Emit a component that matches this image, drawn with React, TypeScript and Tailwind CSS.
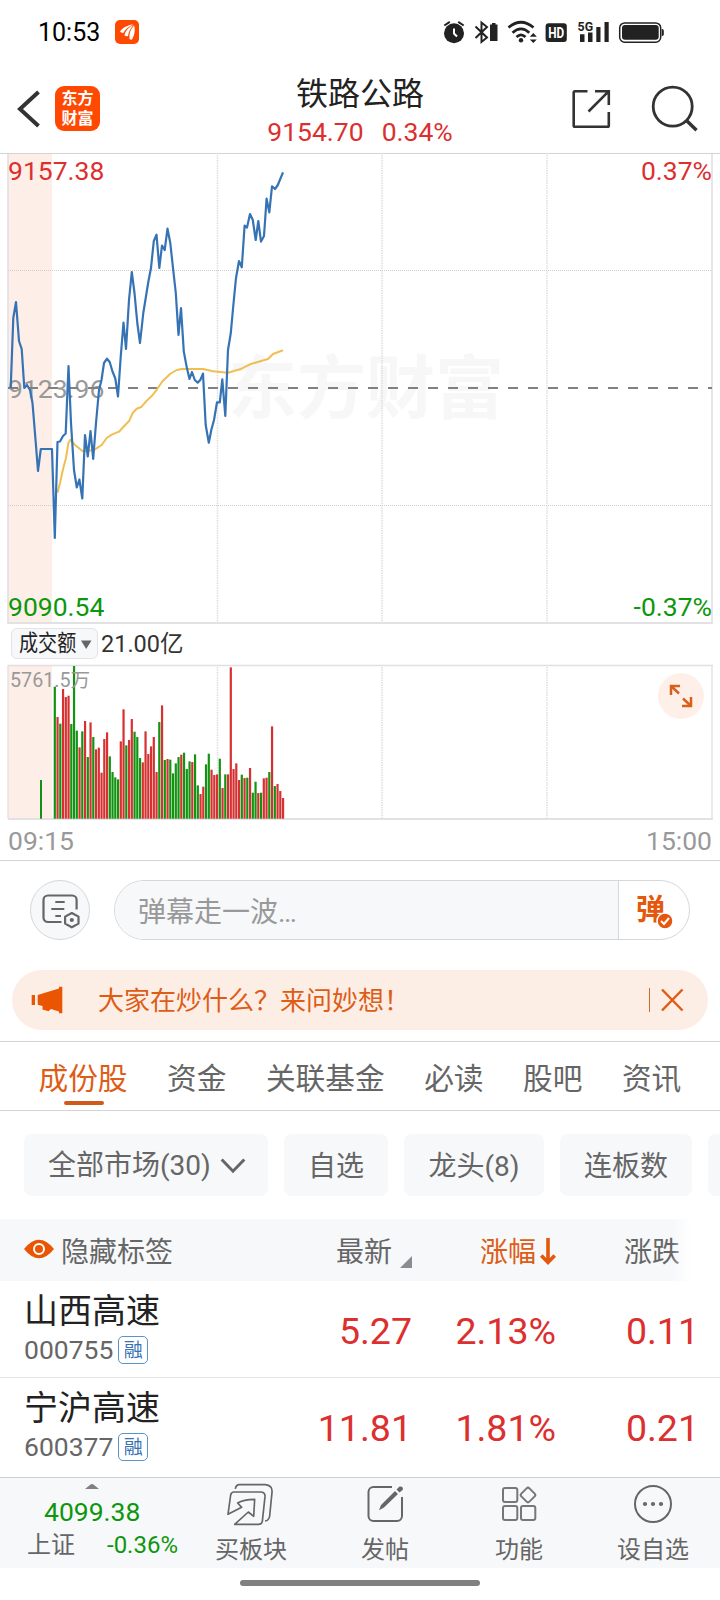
import React from 'react';

const PRICE_LINE =
  '10.7,388 13.3,318 16,302 19,341 21.7,349 24.3,388 27,385 30,390 32.5,403 35.7,442 38,471 40.8,449 52,449 54.8,538 57.5,442 60,441.5 63,436 65.7,433.5 68.5,366 71,423 74,470 76.8,487.5 79.4,479.5 82.3,498.5 85,435 87.8,456.5 90.5,431 93.2,459 96,423 99,390 101.5,380 104,363 107,358.7 109.7,362 112.5,371.5 115.3,378.5 118,396.5 120.7,357 123.5,322.5 126,349 129,300 131.8,272 134.5,293 137.3,323 140,343 143.3,313 148.3,282 151,268 153.8,241 156.5,234.7 159.3,268 162,245.6 164.7,250 167.5,228.7 170.3,243 173,268 175.8,293 178.5,335 181,308 183.8,351.6 186.7,367 189.5,379 192,372 194.8,380 197.7,382.6 200.3,380 203,373.6 205.7,425 208.8,442.7 211.3,430 214,420 217,402.3 219.8,402.3 222.3,379.3 225.3,416 228,350 230.8,333 233.5,303.5 236,278 239,261 241.8,267.3 244.6,225.6 247,227.6 250,214 252.8,220 255.7,240 258.3,221 261,241.6 264,236 266.6,198.6 269.3,212.3 272,186.3 275,189 277.8,185 283,172.3';

const AVG_LINE =
  '56,490 57.8,491.7 60,483 63.3,468 66,458 68.3,443.3 70.3,439.7 75,445 80,449 82.7,451.3 88.5,451 95,449.3 101.7,445 106.7,438 111.7,434.7 119,431.7 123.3,427 129.3,420.7 132.7,413 136.7,408.7 141.7,406.7 146.7,400.7 152.7,395 157,389.3 162.3,381.5 170,374 176.7,370 181.7,369 203,369 213,371.3 228,372.7 240,369.3 250,364.3 268,359 273,354 283,350.3';

// g = down minute, r = up minute, number = bar height
const VOLUME =
  'g396 r305 g285 r389 r365 r369 g284 g458 g264 r214 g262 r293 g185 r289 g245 r208 r213 r138 r239 r259 g187 g140 g124 g118 r232 r328 g220 r236 r299 g261 g245 g182 r169 r262 r194 r217 r245 r140 g290 r340 g176 r179 g177 g136 g166 g185 r192 g198 g149 g172 r170 g193 g100 r74 r96 g163 g195 r147 r131 r133 g180 r92 g133 r133 r454 r149 r166 r116 g132 r122 g123 r152 g78 g111 r77 g78 r121 r123 g140 r277 g98 r104 r83 r62'
    .split(' ')
    .map((v) => ({ up: v[0] === 'r', h: Number(v.slice(1)) / 3 }));

const GRID_X = [217.5, 382, 547];

const TABS = ['成份股', '资金', '关联基金', '必读', '股吧', '资讯'];

const STOCKS = [
  { name: '山西高速', code: '000755', price: '5.27', pct: '2.13%', diff: '0.11' },
  { name: '宁沪高速', code: '600377', price: '11.81', pct: '1.81%', diff: '0.21' },
];

interface IconProps {
  x: number;
  y: number;
  w: number;
  h: number;
  className?: string;
  children: React.ReactNode;
}

const Icon: React.FC<IconProps> = ({ x, y, w, h, className = '', children }) => (
  <svg width={w} height={h} viewBox={`${x} ${y} ${w} ${h}`} fill="none" className={`shrink-0 ${className}`}>
    {children}
  </svg>
);

const StatusBar = () => (
  <div className="flex h-16 items-center pl-[38px] text-black">
    <span className="pt-0.5 text-[25px] leading-8">10:53</span>
    <Icon x={115} y={20} w={24} h={24} className="ml-auto">
      <rect x="115" y="20" width="24" height="24" rx="5" fill="#ff4800" />
      <path d="M120 31.5c2.500-3.500 6.500-6 13-7.200-5 3-8 5.500-9.600 8.600-1.200.3-2.600-.3-3.400-1.400Z" fill="#fff" />
      <path d="M124.400 35.200c1-4.200 4.200-8 9.200-10.400-3.200 3.600-5 7.400-5.600 11.200-1.300.4-2.800.1-3.600-.8Z" fill="#fff" />
      <path d="M129.500 38.800c-.6-5 .8-9.600 4.600-13.400 1.200 3.800.8 9.200-2.200 14.200-.9.200-1.800-.1-2.400-.8Z" fill="#fff" />
    </Icon>
    <div className="w-[304px]" />
    <Icon x={443} y={16} w={277} h={32}>
      {/* alarm */}
      <circle cx="454" cy="33.300" r="10" fill="#222" />
      <path d="M444.300 25.500 449.800 21.800M463.700 25.500 458.200 21.800" stroke="#222" strokeWidth="2" />
      <path d="M454 28.500V33.500L457 36.500" stroke="#fff" strokeWidth="2" />
      {/* bluetooth + device battery */}
      <path d="M475.500 26.500 487 37.500 481.500 42V22.500L487 27 475.500 38" stroke="#222" strokeWidth="2" />
      <path d="M492 24.500V23h3.500v1.500h2V41H490V24.500Z" fill="#222" />
      {/* wifi */}
      <path d="M508.500 27.500Q521 17 533.500 27.500M512.500 32.800Q521 25 529.300 32.800M516.500 37Q521 32.800 525.500 37" stroke="#222" strokeWidth="2.700" />
      <circle cx="521" cy="40.200" r="2.200" fill="#222" />
      <path d="M529.800 36.800h7L533.300 33ZM529.800 39.500h7L533.300 43Z" fill="#222" />
      {/* HD */}
      <rect x="545.600" y="23.300" width="21.200" height="18.700" rx="3" fill="#222" />
      <text x="556.200" y="38" textAnchor="middle" textLength="16" lengthAdjust="spacingAndGlyphs" fontSize="14.500" fontWeight="700" fill="#fff">HD</text>
      {/* signal */}
      <text x="577.600" y="31" textLength="15.500" lengthAdjust="spacingAndGlyphs" fontSize="13.500" fontWeight="700" fill="#222">5G</text>
      <path d="M580 34.300h4.500V42H580ZM588 32.500h4.500V42H588ZM596.300 27h4.200v15h-4.200ZM604.500 22h4.200v20h-4.200Z" fill="#222" />
      {/* battery */}
      <rect x="619.700" y="22.900" width="41" height="19.300" rx="5" stroke="#222" strokeWidth="1.500" />
      <rect x="622" y="25" width="36.700" height="14.800" rx="3" fill="#222" />
      <path d="M661.800 28.700q2 .3 2 2v3.600q0 1.700-2 2Z" fill="#222" />
    </Icon>
  </div>
);

const Header = () => (
  <div className="relative flex h-[90px] items-center justify-between border-b border-[#d4d4d6] pl-4">
    <div className="flex items-center gap-[14px]">
      <Icon x={16} y={88} w={25} h={42}>
        <path d="M38.500 92 20 109 38.500 126" stroke="#333" strokeWidth="4" />
      </Icon>
      <div className="h-[45px] w-[45px] rounded-[9px] bg-[#ff4800] pt-[3px] text-center text-[16px] font-bold leading-[19.500px] text-white">
        东方
        <br />
        财富
      </div>
    </div>
    <div className="absolute inset-x-0 top-[10px] flex flex-col items-center">
      <div className="text-[32px] leading-[40px] text-[#222]">铁路公路</div>
      <div className="flex gap-[18px] pt-px text-[26.500px] leading-[34px] text-[#dc2f2f]">
        <span>9154.70</span>
        <span>0.34%</span>
      </div>
    </div>
    <Icon x={570} y={84} w={150} h={50}>
      <path d="M587.500 91.200H575q-1.300 0-1.300 1.300V125.500q0 1.300 1.300 1.300H607.500q1.300 0 1.300-1.300V112M595 91.200H608.800V105M588.500 111.500 608.800 91.200" stroke="#333" strokeWidth="2.600" />
      <circle cx="672.700" cy="106.600" r="19.500" stroke="#333" strokeWidth="2.800" />
      <path d="M686.500 120.500 696.500 130.300" stroke="#333" strokeWidth="3.400" />
    </Icon>
  </div>
);

const PriceChart = () => (
  <svg width="720" height="471" viewBox="0 154 720 471" fill="none" className="block" fontSize="26.5">
    <rect x="8" y="154" width="44" height="469" fill="#fdeee8" />
    <text x="366" y="413" textAnchor="middle" fontSize="69" fontWeight="700" fill="#f7f7f7">东方财富</text>
    <path d="M8 154V624M712 154V624" stroke="#e0e0e2" strokeWidth="1.500" />
    <path d="M8 623H713" stroke="#e2e2e4" strokeWidth="2" />
    {GRID_X.map((x) => (
      <path key={x} d={`M${x} 155V622`} stroke="#dedede" strokeWidth="1.500" strokeDasharray="1.500 1" />
    ))}
    <path d="M8 270.500H712M8 505.500H712" stroke="#cfcfcf" strokeDasharray="1 1" />
    <text x="8" y="180" fill="#dc2f2f">9157.38</text>
    <text x="712" y="180" textAnchor="end" fill="#dc2f2f">0.37%</text>
    <text x="8" y="398" fill="#999">9123.96</text>
    <text x="8" y="616" fill="#0d970d">9090.54</text>
    <text x="712" y="616" textAnchor="end" fill="#0d970d">-0.37%</text>
    <path d="M8 388H712" stroke="#808080" strokeWidth="2" strokeDasharray="10 10" />
    <polyline points={AVG_LINE} stroke="#f0bf52" strokeWidth="2" strokeLinejoin="round" />
    <polyline points={PRICE_LINE} stroke="#3673b5" strokeWidth="2.200" strokeLinejoin="round" />
  </svg>
);

const VolumeChart = () => (
  <svg width="720" height="156" viewBox="0 664 720 156" fill="none" className="block">
    <rect x="8" y="666" width="44" height="152" fill="#fdeee8" />
    <path d="M8 665.500H713M8 665V819M712 665V819" stroke="#e0e0e2" strokeWidth="1.300" />
    <path d="M8 819H713" stroke="#e2e2e4" strokeWidth="2" />
    {GRID_X.map((x) => (
      <path key={x} d={`M${x} 667V818`} stroke="#dedede" strokeWidth="1.500" strokeDasharray="1.500 1" />
    ))}
    <rect x="40" y="780" width="2" height="38.700" fill="#159015" />
    {VOLUME.map((v, i) => (
      <rect key={i} x={53.7 + i * 2.75} y={818.7 - v.h} width="2.200" height={v.h} fill={v.up ? '#d63030' : '#129312'} />
    ))}
    <text x="10" y="687" fontSize="19.700" fill="#999">5761.5万</text>
    <circle cx="681" cy="696" r="23" fill="#fef0e8" />
    <path d="M680 686H671V695M671.500 686.500 679 693.500M682 706H691V697M690.500 705.500 683 698.500" stroke="#d9601a" strokeWidth="2.500" />
  </svg>
);

const DanmakuBar = () => (
  <div className="flex h-[98px] items-start gap-6 pl-[30px] pt-[19px]">
    <div className="flex h-[60px] w-[60px] items-center justify-center rounded-full border border-[#d5d7db] bg-[#f7f8fa]">
      <Icon x={30} y={880} w={58} h={58}>
        <g stroke="#666" strokeWidth="2.200" transform="translate(-1 -1)">
          <path d="M76.600 909.500V900a4.500 4.500 0 0 0-4.500-4.500H48a4.500 4.500 0 0 0-4.500 4.500V917.500a4.500 4.500 0 0 0 4.500 4.500H61.500" />
          <path d="M55.300 902H64.700M51.300 909H64.300M55.300 916H61" />
          <path d="M71.800 913 78.500 916.600V923.600L71.800 927.300 65.100 923.600V916.600Z" strokeLinejoin="round" />
          <circle cx="71.800" cy="920" r="1" />
        </g>
      </Icon>
    </div>
    <div className="flex h-[60px] w-[576px] overflow-hidden rounded-full border border-[#d5d7db]">
      <div className="w-[504px] border-r border-[#d5d7db] bg-[#f7f8fa] pl-[23px] text-[28px] leading-[63px] text-[#999]">弹幕走一波…</div>
      <div className="relative pl-[17px] text-[29px] font-bold leading-[58px] text-[#e4570c]">
        弹
        <Icon x={656} y={912} w={18} h={18} className="absolute left-[37px] top-[31px]">
          <circle cx="665" cy="921" r="8" fill="#e4570c" stroke="#fff" strokeWidth="1.500" />
          <path d="M661 921 664 924 669 918" stroke="#fff" strokeWidth="2" />
        </Icon>
      </div>
    </div>
  </div>
);

const Banner = () => (
  <div className="mx-3 mt-[11px] flex h-[60px] items-center rounded-full bg-[#fceee5] pl-[19px] text-[#de5c16]">
    <Icon x={31} y={984} w={33} h={32}>
      <path d="M31.700 995H35V1005H31.700ZM37.700 995 59 988.500V986.700H62.300V1013.200H59V1011.500L51 1009 48.500 1011.200 42.500 1009.500V1006L37.700 1004.800Z" fill="#ea5504" />
    </Icon>
    <span className="ml-[34px] pt-0.5 text-[26px] leading-[58px]">大家在炒什么？来问妙想！</span>
    <div className="ml-auto h-6 w-px bg-[#cf6a35]" />
    <Icon x={660} y={984} w={48} h={32} className="ml-[10px]">
      <path d="M662 989.500 682.500 1010.500M682.500 989.500 662 1010.500" stroke="#de5c16" strokeWidth="2.500" />
    </Icon>
  </div>
);

const Tabs = () => (
  <div className="mt-[11px] flex h-[70px] gap-[39.500px] border-y border-[#d4d4d6] pl-[38.500px] text-[29.700px] leading-[74px] text-[#666]">
    {TABS.map((tab, i) => (
      <div key={tab} className={i === 0 ? 'relative text-[#de5c16]' : ''}>
        {tab}
        {i === 0 && <span className="absolute left-[25px] top-[59px] h-1 w-10 rounded-full bg-[#d05a1c]" />}
      </div>
    ))}
  </div>
);

const Filters = () => (
  <div className="mt-[23px] flex h-[62px] gap-4 overflow-hidden pl-6 text-[28px] leading-[65px] text-[#666]">
    <div className="flex w-[244px] shrink-0 items-center rounded-lg bg-[#f7f8fa] pl-6">
      全部市场(30)
      <Icon x={219} y={1154} w={26} h={20} className="ml-[9px]">
        <path d="M220.700 1158.500 232 1170.200 243.300 1158.500" stroke="#666" strokeWidth="3" />
      </Icon>
    </div>
    <div className="w-[104px] shrink-0 rounded-lg bg-[#f7f8fa] text-center">自选</div>
    <div className="w-[140px] shrink-0 rounded-lg bg-[#f7f8fa] text-center">龙头(8)</div>
    <div className="w-[132px] shrink-0 rounded-lg bg-[#f7f8fa] text-center">连板数</div>
    <div className="w-[132px] shrink-0 rounded-lg bg-[#f7f8fa]" />
  </div>
);

const StockTable = () => (
  <div>
    <div className="relative mt-[23px] grid h-[62px] grid-cols-[248px_140px_144px_144px] bg-[#f7f8fa] pl-6 text-[28px] leading-[62px] text-[#666]">
      <div className="flex items-center">
        <Icon x={24} y={1239} w={30} h={22} className="-mt-1">
          <path d="M24 1249Q39 1230.500 54 1249 39 1267.500 24 1249Z" fill="#ea5504" />
          <circle cx="39" cy="1249" r="5" stroke="#fff" strokeWidth="2" />
        </Icon>
        <span className="ml-[7px] pt-[3px]">隐藏标签</span>
      </div>
      <div className="flex items-center justify-end">
        <span className="pt-[3px]">最新</span>
        <Icon x={392} y={1232} w={20} h={36}>
          <path d="M400 1266 412 1254V1266Z" fill="#8c8c90" />
        </Icon>
      </div>
      <div className="flex items-center justify-end text-[#de5c16]">
        <span className="pt-[3px]">涨幅</span>
        <Icon x={536} y={1232} w={20} h={36}>
          <path d="M548 1236V1261M541.300 1253.500 548 1260.500 554.700 1253.500" stroke="#e4570c" strokeWidth="3.600" />
        </Icon>
      </div>
      <div className="flex items-center justify-end">
        <span className="pt-[3px]">涨跌</span>
        <span className="w-5" />
      </div>
      <div className="absolute right-0 top-0 h-full w-12 bg-linear-to-r from-white/0 to-white to-40%" />
    </div>
    {STOCKS.map((s, i) => (
      <div
        key={s.code}
        className={`grid grid-cols-[248px_140px_144px_143px] pl-6 text-right text-[37.500px] leading-[100px] text-[#dc2f2f] ${
          i === 0 ? 'h-[97px] border-b border-[#e6e6e8]' : 'h-[99px]'
        }`}
      >
        <div className="pt-2 text-left">
          <div className="text-[34px] leading-[44px] text-[#222]">{s.name}</div>
          <div className="flex items-center gap-[5px] text-[26.500px] leading-[34px] text-[#666]">
            {s.code}
            <span className="h-7 w-[30px] rounded-[5px] border border-[#5b92c8] text-center text-[19px] leading-[27px] text-[#3673b5]">融</span>
          </div>
        </div>
        <div>{s.price}</div>
        <div>{s.pct}</div>
        <div>{s.diff}</div>
      </div>
    ))}
  </div>
);

const NavItem = ({ label, children }: { label: string; children: React.ReactNode }) => (
  <div className="flex w-[134px] flex-col items-center pt-[5px]">
    {children}
    <span className="mt-[7px] text-[24px] leading-8">{label}</span>
  </div>
);

const BottomNav = () => (
  <div className="flex h-[91px] border-t border-[#d0d0d4] bg-[#f7f8fa] text-[#666]">
    <div className="relative w-[184px] pt-[25px]">
      <Icon x={84} y={1483} w={16} h={7} className="absolute left-[84px] top-[5px]">
        <path d="M85 1489 90.500 1484.500Q92 1483.500 93.500 1484.500L99 1489Z" fill="#808080" />
      </Icon>
      <div className="pl-[44px] text-[26.500px] leading-[17px] text-[#0d970d]">4099.38</div>
      <div className="mt-[9px] flex items-center pl-[27px] leading-8">
        <span className="text-[24px]">上证</span>
        <span className="ml-8 text-[24px] text-[#0d970d]">-0.36%</span>
      </div>
    </div>
    <NavItem label="买板块">
      <Icon x={226} y={1483} w={50} h={44}>
        <g transform="translate(0 1280) scale(.33333)" stroke="#666" strokeWidth="5">
          <path d="M706 627Q708 614 718 614H796Q818 616 816 637L809 708Q807 722 795 723" />
          <path d="M692 645Q694 636 702 636H784Q796 638 795 650L787 724Q785 733 776 733H704L745 696 761 709 764 658Q730 658 713 669L725 682 684 703Z" strokeLinejoin="round" />
        </g>
      </Icon>
    </NavItem>
    <NavItem label="发帖">
      <Icon x={363} y={1483} w={44} h={44}>
        <path d="M392 1487H373.500a5 5 0 0 0-5 5V1516a5 5 0 0 0 5 5H397a5 5 0 0 0 5-5V1497" stroke="#666" strokeWidth="2" />
        <path d="M379 1510.300 381 1505 395 1491 398 1494 384 1507.500ZM396.500 1489.500 399.500 1486.500Q401.500 1486 402.600 1487.500 403.500 1489 402.500 1490L399.500 1492.500Z" fill="#666" />
      </Icon>
    </NavItem>
    <NavItem label="功能">
      <Icon x={497} y={1483} w={44} h={44}>
        <g stroke="#777" strokeWidth="2">
          <rect x="503" y="1488" width="14.300" height="14" rx="2" />
          <rect x="503" y="1506" width="14.300" height="14" rx="2" />
          <rect x="521" y="1506" width="14.300" height="14" rx="2" />
          <rect x="522.300" y="1489.300" width="11.400" height="11.400" rx="2" transform="rotate(45 528 1495)" />
        </g>
      </Icon>
    </NavItem>
    <NavItem label="设自选">
      <Icon x={631} y={1483} w={44} h={44}>
        <circle cx="653" cy="1504" r="18" stroke="#666" strokeWidth="2" />
        <path d="M645 1504h.01M653 1504h.01M661 1504h.01" stroke="#666" strokeWidth="4.200" strokeLinecap="round" />
      </Icon>
    </NavItem>
  </div>
);

export default function App() {
  return (
    <div className="flex h-[1600px] w-[720px] flex-col overflow-hidden bg-white font-['Roboto','Noto_Sans_CJK_SC',sans-serif]">
      <StatusBar />
      <Header />
      <PriceChart />
      <div className="flex h-[39px] items-center pl-[11px] text-[23.500px] text-[#333]">
        <div className="-mt-0.5 flex h-[31px] w-[87px] items-center rounded-md border border-[#e2e3e8] bg-[#f7f8fa] pl-[7px]">
          <span className="w-[57px] origin-left scale-x-[.83] whitespace-nowrap text-[23px] leading-[29px] text-[#222]">成交额</span>
          <Icon x={82} y={636} w={12} h={14} className="ml-[5px]">
            <path d="M82 639.500H92.500L87.200 648Z" fill="#666" />
          </Icon>
        </div>
        <span className="-mt-0.5 ml-[3px] leading-[36px]">21.00亿</span>
      </div>
      <VolumeChart />
      <div className="flex h-[41px] justify-between border-b border-[#d4d4d6] px-2 text-[26.500px] leading-[42px] text-[#999]">
        <span>09:15</span>
        <span>15:00</span>
      </div>
      <DanmakuBar />
      <Banner />
      <Tabs />
      <Filters />
      <StockTable />
      <BottomNav />
      <div className="mx-auto mt-3 h-1.5 w-60 rounded-full bg-[#808080]" />
    </div>
  );
}
